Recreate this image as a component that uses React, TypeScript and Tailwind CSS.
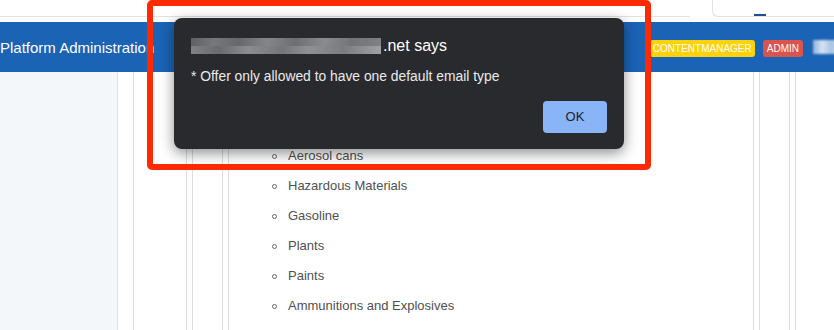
const items = [
  'Aerosol cans',
  'Hazardous Materials',
  'Gasoline',
  'Plants',
  'Paints',
  'Ammunitions and Explosives',
]

function TopBar() {
  return (
    <div className="flex h-[22px] bg-white">
      <div className="w-[690px] h-[17px] border-b border-[#e2e2e2]" />
      <div className="w-[22px]" />
      <div className="flex-1 h-[17px] border-b border-l border-[#e2e2e2] rounded-bl-[6px] flex items-end">
        <div className="ml-[41px] w-[12px] h-[2px] bg-[#1b4f9c]" />
      </div>
    </div>
  )
}

function Header() {
  return (
    <div className="flex items-center h-[50px] bg-[#1b63b5]">
      <span className="text-white text-[15px] leading-none whitespace-nowrap">
        Platform Administration
      </span>
      <div className="flex-1" />
      <div className="flex items-center mt-[3px] mr-[-10px]">
        <span className="h-[17px] px-[3px] flex items-center rounded-[3px] bg-[#fdd20b] text-white text-[10px] leading-none">
          CONTENTMANAGER
        </span>
        <span className="ml-[8px] h-[17px] px-[4px] flex items-center rounded-[3px] bg-[#d9534f] text-white text-[10px] leading-none">
          ADMIN
        </span>
        <div className="ml-[10px] w-[31px] h-[14px] mt-[-4px] blur-[1px] bg-[linear-gradient(90deg,#8fb1da,#d6e3f3_30%,#a8c3e4_60%,#e4edf8)]" />
      </div>
    </div>
  )
}

function Body() {
  return (
    <div className="flex h-[258px]">
      <aside className="w-[118px] shrink-0 bg-[#f4f7fa] border-r border-[#dde3ea]" />
      <div className="pl-[15px] flex">
        <div className="w-[715px] shrink-0 border-x border-[#dddddd] px-[52px] flex">
          <div className="w-[610px] shrink-0 border-x border-[#dddddd] px-[5px] flex">
            <div className="flex-1 border-x border-[#dddddd] px-[29px] flex">
              <div className="flex-1 border-x border-[#dddddd] px-[5px] flex">
                <div className="flex-1 border-x border-[#dddddd] pl-[43px] pt-[69px]">
                  <ul>
                    {items.map((item) => (
                      <li key={item} className="h-[30px] flex items-center text-[13px] text-[#505050]">
                        <span className="w-[5px] h-[5px] rounded-full border border-[#666666] mr-[11px]" />
                        {item}
                      </li>
                    ))}
                  </ul>
                </div>
              </div>
            </div>
          </div>
        </div>
      </div>
    </div>
  )
}

function AlertDialog() {
  return (
    <div className="absolute left-[174px] top-[18px] w-[450px] h-[131px] bg-[#292a2d] rounded-[8px] shadow-[0_4px_14px_rgba(0,0,0,0.45)] pl-[17px] pr-[17px] pt-[19px]">
      <div className="flex items-center h-[17px]">
        <div className="w-[190px] h-[16px] blur-[0.6px]">
          <div className="h-[8px] bg-[linear-gradient(90deg,#5f6064,#77787c_12%,#66676b_25%,#85868a_40%,#6d6e72_55%,#8a8b8f_70%,#727377_85%,#808185)]" />
          <div className="h-[8px] bg-[linear-gradient(90deg,#808185,#6a6b6f_15%,#8c8d91_30%,#75767a_48%,#909195_62%,#7b7c80_80%,#a0a1a5)]" />
        </div>
        <span className="ml-[2px] text-white text-[16px] leading-none">.net says</span>
      </div>
      <div className="mt-[14px] h-[16px] leading-[16px] text-[13.85px] text-[#e8eaed] whitespace-nowrap">
        * Offer only allowed to have one default email type
      </div>
      <div className="mt-[17px] flex justify-end">
        <button className="w-[64px] h-[32px] rounded-[4px] bg-[#8ab4f8] text-[#202124] text-[13px]">
          OK
        </button>
      </div>
    </div>
  )
}

export default function App() {
  return (
    <div className="relative w-[834px] h-[330px] overflow-hidden bg-white font-['Liberation_Sans',Arial,sans-serif]">
      <TopBar />
      <Header />
      <Body />
      <AlertDialog />
      <div className="absolute left-[147px] top-0 w-[504px] h-[170px] border-[6px] border-[#ff2a00] rounded-[5px]" />
    </div>
  )
}
